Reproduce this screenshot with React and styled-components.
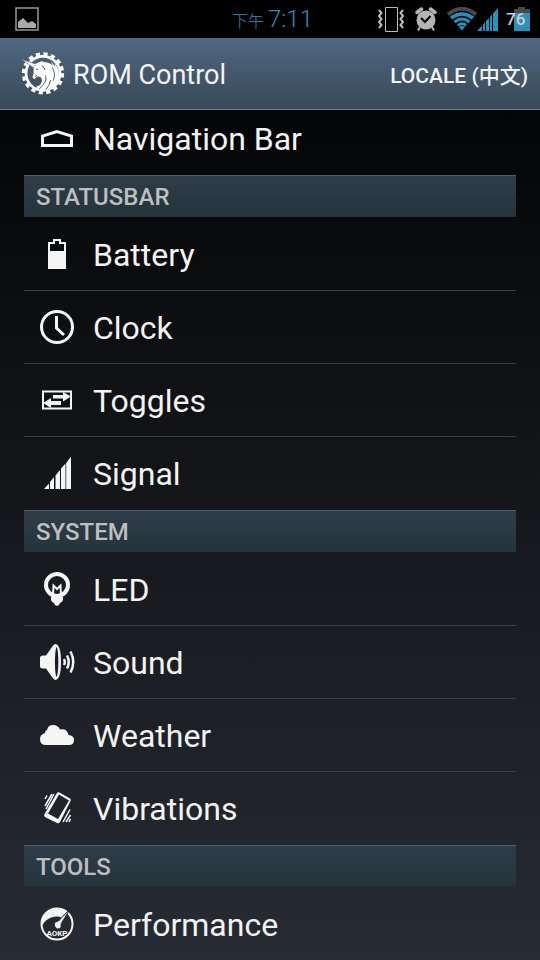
import React from 'react';
import styled, { createGlobalStyle } from 'styled-components';

const GlobalStyle = createGlobalStyle`
  * {
    box-sizing: border-box;
  }
  body {
    margin: 0;
    background: #000;
    font-family: Roboto, "Noto Sans CJK SC", sans-serif;
  }
  button {
    font-family: inherit;
    border: none;
    background: none;
    padding: 0;
    cursor: pointer;
  }
`

const Screen = styled.div`
  display: flex;
  flex-direction: column;
  height: 100vh;
  overflow: hidden;
  background: linear-gradient(#000000, #272b33);
`

const StatusBar = styled.div`
  display: grid;
  grid-template-columns: 1fr auto 1fr;
  align-items: center;
  flex: none;
  height: 38px;
  padding: 0 10px 0 15px;
  background-color: #000;
`

const Time = styled.div`
  display: flex;
  align-items: baseline;
  gap: 4px;
  color: #2b8fbc;
  font-size: 24px;
  font-weight: 300;
`

const Meridiem = styled.span`
  font-size: 16px;
`

const StatusIcons = styled.div`
  display: flex;
  align-items: center;
  justify-content: flex-end;
  gap: 10px;
`

const Network = styled.div`
  display: flex;
  gap: 8px;
`

const Reception = styled.div`
  display: flex;
`

const BatteryLevel = styled.div`
  position: relative;
  display: flex;
  width: 24px;
  justify-content: flex-end;
`

const Percent = styled.span`
  position: absolute;
  left: 0;
  top: 2px;
  color: #cccccc;
  font-size: 17px;
  font-weight: 500;
  line-height: 20px;
`

const ActionBar = styled.header`
  display: flex;
  align-items: center;
  flex: none;
  height: 72px;
  padding: 0 12px 0 21px;
  background: linear-gradient(#506880, #384858);
  border-bottom: 1px solid #64808f;
`

const Title = styled.h1`
  flex: 1;
  margin: 0;
  padding: 2px 0 0 8px;
  color: #f3f3f3;
  font-size: 27px;
  font-weight: 400;
`

const LocaleButton = styled.button`
  color: #f3f3f3;
  font-size: 21px;
  font-weight: 500;
`

const List = styled.main`
  display: flex;
  flex-direction: column;
  justify-content: flex-end;
  flex: 1;
  min-height: 0;
  margin-bottom: -1px;
  overflow: hidden;
  padding: 0 24px;
`

const SectionTitle = styled.h2`
  flex: none;
  height: 42px;
  margin: 0 0 1px;
  padding: 1px 12px 0;
  border-top: 1px solid #4b5d68;
  background: linear-gradient(#2f3d49, #23343b);
  color: #bebebe;
  font-size: 24px;
  font-weight: 500;
  line-height: 41px;
`

const Row = styled.button`
  display: flex;
  align-items: center;
  flex: none;
  width: 100%;
  height: 73px;
  padding: 2px 12px 0;
  border-bottom: 1px solid ${props => props.$last ? 'transparent' : '#3b3e42'};
  color: #f3f3f3;
  font-size: 32px;
  text-align: left;
`

const IconBox = styled.span`
  display: flex;
  width: 42px;
  margin-right: 15px;
  padding-bottom: 2px;
  justify-content: center;
`

const Icon = ({ children }) => (
  <svg width="36" height="36" viewBox="0 0 36 36" fill="#f5f5f5" aria-hidden="true">
    {children}
  </svg>
)

const icons = {
  navigation: <path d="M3.5 25.5V16L18 11.5L32.5 16V25.5Z" fill="none" stroke="#f5f5f5" strokeWidth="3" />,
  battery: <path fillRule="evenodd" d="M9 6H14V3H22V6H27V33H9ZM11 8V15H25V8H20V5H16V8Z" />,
  clock: (
    <g fill="none" stroke="#f5f5f5" strokeWidth="3">
      <circle cx="18" cy="18" r="15.5" />
      <path d="M17.5 7V19L25 26" />
    </g>
  ),
  toggles: (
    <>
      <path d="M4 9.5H32V26.5H4Z" fill="none" stroke="#f5f5f5" strokeWidth="2" />
      <path d="M14 13H24V10L32 14.5L24 19.5V16.5H14ZM22 19V23H12V26L4 21L12 16V19Z" />
    </>
  ),
  signal: <path d="M5 34L10 28.5V34ZM11 34V27L15 22V34ZM16.5 34V20.5L21 15V34ZM22 34V13.5L26.5 8.5V34ZM27.2 34V8L32 1.5V34Z" />,
  led: (
    <>
      <circle cx="18" cy="14" r="11" fill="none" stroke="#f5f5f5" strokeWidth="4" />
      <path d="M14 24L14.5 14.5L18 18L21.5 14.5L22 24" fill="none" stroke="#f5f5f5" strokeWidth="2" />
      <path d="M12 26Q18 25 24 26V29Q23 32 21 32L20 34L18 35L16 34L15 32Q13 32 12 29Z" />
    </>
  ),
  sound: (
    <>
      <path fillRule="evenodd" d="M1 14Q1 11.5 4 11.5H7L13 3Q14.5 0 16.5 0Q22 1 22 18Q22 35 16.5 36Q14.5 36 13 33L7 24.5H4Q1 24.5 1 22ZM17.5 3C15.5 7 15.5 29 17.5 33C20 31 20 5 17.5 3Z" />
      <path d="M25 15Q26.5 18 25 21M28 11.5Q31.5 18 28 24.5M31.5 7.5Q37 18 31.5 28.5" fill="none" stroke="#f5f5f5" strokeWidth="2.5" />
    </>
  ),
  weather: <path d="M7 28Q1 28 1 22Q1 17.5 6 16Q6 13.5 8 13Q9 8 14 8Q19 8 21 12.5Q28 11 29.5 18Q35 18.5 35 23Q35 28 30 28Z" />,
  vibrations: (
    <>
      <path fillRule="evenodd" d="M18 3Q19 2 20.5 2.5L31 8.5Q32.5 9.5 31.5 11L21 32Q19.5 34 18 33L6 27Q4.5 26 5.5 24ZM20 4.5L9 23.5L19 29L30 10.5Z" />
      <path d="M6 9L8 5.5M6 16L13 4M7 19L15 4M24 32L31 19.5M27 32L31.5 25M30 32L31.5 29" fill="none" stroke="#f5f5f5" strokeWidth="1.5" />
    </>
  ),
  performance: (
    <>
      <circle cx="18" cy="18" r="15.5" fill="none" stroke="#f5f5f5" strokeWidth="2" />
      <path d="M3 20C2 9 9 2 18 2Q24 2 28 5L23 12C16 8 6 13 3 20Z" />
      <path d="M31 3L22 18Q23 23 18.5 23Q14 21 16 16L19.5 15Z" stroke="#24272f" strokeWidth="1" />
      <text x="18" y="30" fontSize="8" fontWeight="700" textAnchor="middle">AOKP</text>
    </>
  ),
};

const Logo = () => (
  <svg width="44" height="45" viewBox="33 35 132 135" aria-hidden="true">
    <g fill="none" stroke="#fff">
      <circle cx="99" cy="102" r="51" strokeWidth="8" />
      <circle cx="99" cy="102" r="58" strokeWidth="11" pathLength="32" strokeDasharray="1.1 0.9" />
    </g>
    <path d="M33 59L77 74L70 85Z" fill="#fff" stroke="#4a6074" strokeWidth="2" />
    <path
      d="M71 82L77 73L95 66L104 69Q120 70 128 79L123 66L136 83L133 70Q148 91 147 107L154 102Q154 116 145 127L152 124Q140 145 121 150Q101 158 83 150Q77 145 80 141Q92 139 95 128Q97 117 91 113Q82 109 78 115L73 120L67 113Q72 103 71 91Z"
      fill="#fff"
    />
    <path
      d="M78 89L84 91M95 79Q105 84 105 92M106 108Q112 122 99 136L88 149M127 84Q138 104 130 124M122 122Q119 139 107 151M75 112L81 108"
      fill="none"
      stroke="#4a6074"
      strokeWidth="3"
    />
  </svg>
)

const PictureIcon = () => (
  <svg width="24" height="24" viewBox="0 0 24 24" aria-hidden="true">
    <path d="M1 1H23V23H1Z" fill="none" stroke="#999" strokeWidth="1.5" />
    <path d="M3 21V15L8 11L13 16L17 14L21 17V21Z" fill="#aaa" />
  </svg>
)

const VibrateIcon = () => (
  <svg width="28" height="26" viewBox="0 0 28 26" fill="none" stroke="#bbb" aria-hidden="true">
    <path d="M8.5 1.5H20.5V25.5H8.5Z" />
    <path d="M2 4L4.5 7L2 10L4.5 13L2 16L4.5 19L2 22M26 4L23.5 7L26 10L23.5 13L26 16L23.5 19L26 22" strokeWidth="2" />
  </svg>
)

const AlarmIcon = () => (
  <svg width="22" height="24" viewBox="0 0 22 24" aria-hidden="true">
    <circle cx="11" cy="13" r="9.5" fill="#b4b4b4" />
    <path d="M2 5.5L6.5 2M20 5.5L15.5 2" stroke="#b4b4b4" strokeWidth="3.5" strokeLinecap="round" />
    <path d="M5 20L3 23.5M17 20L19 23.5" stroke="#b4b4b4" strokeWidth="2" />
    <path d="M6 11L10 15L15.5 9" fill="none" stroke="#000" strokeWidth="2" />
  </svg>
)

const WifiIcon = () => (
  <svg width="30" height="24" viewBox="0 0 30 24" fill="none" aria-hidden="true">
    <path d="M1 7.5Q15-4 29 7.5" stroke="#484848" strokeWidth="4" />
    <path d="M4 11Q15 3 26 11" stroke="#2b8fbc" strokeWidth="3.5" />
    <path d="M7.5 15Q15 9 22.5 15M11 18.5Q15 15 19 18.5" stroke="#2b8fbc" strokeWidth="3" />
    <path d="M12 20Q15 18 18 20L15 23.5Z" fill="#2b8fbc" />
  </svg>
)

const StatusSignalIcon = () => (
  <svg width="21" height="24" viewBox="0 0 21 24" fill="#2b8fbc" aria-hidden="true">
    <path d="M0 24L5 18.5V24ZM6 24V17.5L8 15V24ZM9 24V14L12 11V24ZM13 24V10L15 7.5V24ZM16 24V6.5L21 1V24Z" />
  </svg>
)

const BatteryShape = () => (
  <svg width="16" height="24" viewBox="0 0 16 24" aria-hidden="true">
    <path d="M0 2H4V0H11V2H16V6H0Z" fill="#484848" />
    <path d="M0 6H16V24H0Z" fill="#2b8fbc" />
  </svg>
)

const sections = [
  { items: [{ icon: 'navigation', label: 'Navigation Bar' }] },
  {
    title: 'STATUSBAR',
    items: [
      { icon: 'battery', label: 'Battery' },
      { icon: 'clock', label: 'Clock' },
      { icon: 'toggles', label: 'Toggles' },
      { icon: 'signal', label: 'Signal' },
    ],
  },
  {
    title: 'SYSTEM',
    items: [
      { icon: 'led', label: 'LED' },
      { icon: 'sound', label: 'Sound' },
      { icon: 'weather', label: 'Weather' },
      { icon: 'vibrations', label: 'Vibrations' },
    ],
  },
  { title: 'TOOLS', items: [{ icon: 'performance', label: 'Performance' }] },
];

const App = () => (
  <Screen>
    <GlobalStyle />
    <StatusBar>
      <PictureIcon />
      <Time><Meridiem>下午</Meridiem>7:11</Time>
      <StatusIcons>
        <VibrateIcon />
        <AlarmIcon />
        <Network>
          <Reception>
            <WifiIcon />
            <StatusSignalIcon />
          </Reception>
          <BatteryLevel>
            <BatteryShape />
            <Percent>76</Percent>
          </BatteryLevel>
        </Network>
      </StatusIcons>
    </StatusBar>
    <ActionBar>
      <Logo />
      <Title>ROM Control</Title>
      <LocaleButton>LOCALE (中文)</LocaleButton>
    </ActionBar>
    <List>
      {sections.map(({ title, items }) => (
        <React.Fragment key={title || 'top'}>
          {title && <SectionTitle>{title}</SectionTitle>}
          {items.map(({ icon, label }, index) => (
            <Row key={label} $last={index === items.length - 1}>
              <IconBox><Icon>{icons[icon]}</Icon></IconBox>
              {label}
            </Row>
          ))}
        </React.Fragment>
      ))}
    </List>
  </Screen>
)

export default App;
